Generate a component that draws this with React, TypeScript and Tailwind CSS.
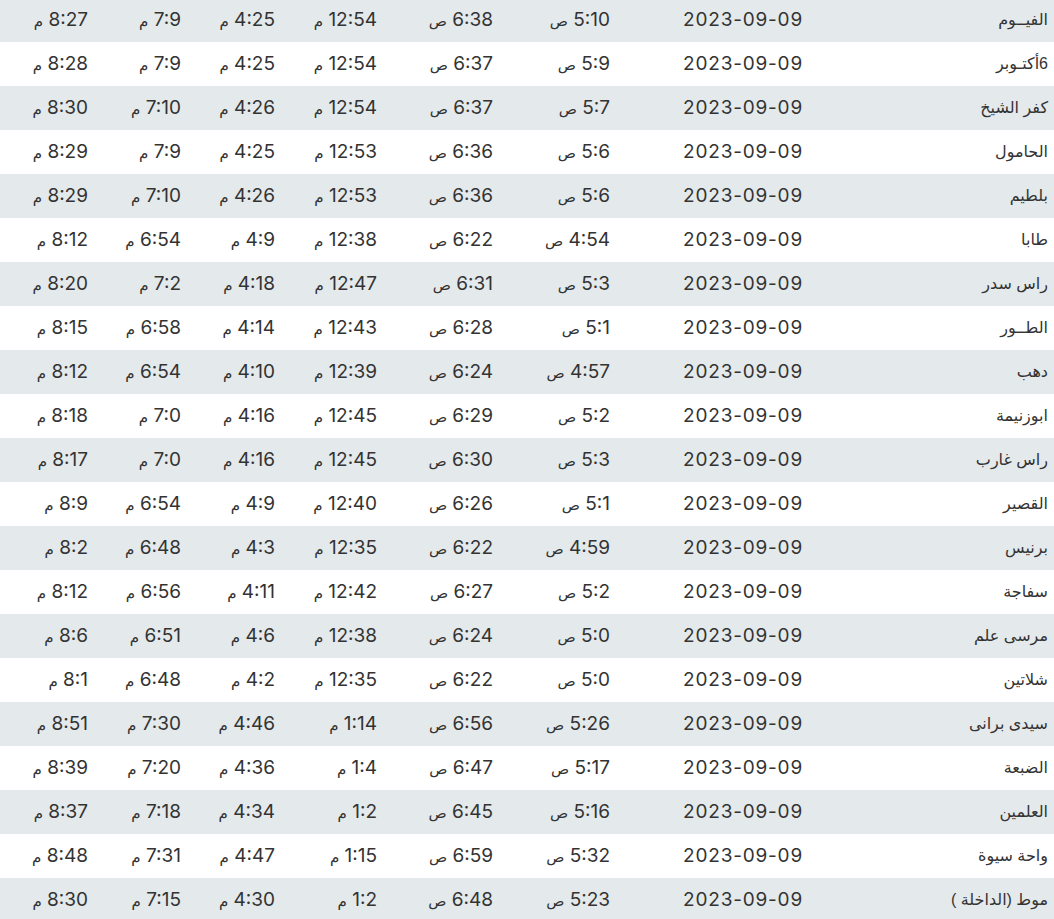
const rows: string[][] = [
  ["الفيــوم", "5:10 ص", "6:38 ص", "12:54 م", "4:25 م", "7:9 م", "8:27 م"],
  ["6أكتـوبر", "5:9 ص", "6:37 ص", "12:54 م", "4:25 م", "7:9 م", "8:28 م"],
  ["كفر الشيخ", "5:7 ص", "6:37 ص", "12:54 م", "4:26 م", "7:10 م", "8:30 م"],
  ["الحامول", "5:6 ص", "6:36 ص", "12:53 م", "4:25 م", "7:9 م", "8:29 م"],
  ["بلطيم", "5:6 ص", "6:36 ص", "12:53 م", "4:26 م", "7:10 م", "8:29 م"],
  ["طابا", "4:54 ص", "6:22 ص", "12:38 م", "4:9 م", "6:54 م", "8:12 م"],
  ["راس سدر", "5:3 ص", "6:31 ص", "12:47 م", "4:18 م", "7:2 م", "8:20 م"],
  ["الطــور", "5:1 ص", "6:28 ص", "12:43 م", "4:14 م", "6:58 م", "8:15 م"],
  ["دهب", "4:57 ص", "6:24 ص", "12:39 م", "4:10 م", "6:54 م", "8:12 م"],
  ["ابوزنيمة", "5:2 ص", "6:29 ص", "12:45 م", "4:16 م", "7:0 م", "8:18 م"],
  ["راس غارب", "5:3 ص", "6:30 ص", "12:45 م", "4:16 م", "7:0 م", "8:17 م"],
  ["القصير", "5:1 ص", "6:26 ص", "12:40 م", "4:9 م", "6:54 م", "8:9 م"],
  ["برنيس", "4:59 ص", "6:22 ص", "12:35 م", "4:3 م", "6:48 م", "8:2 م"],
  ["سفاجة", "5:2 ص", "6:27 ص", "12:42 م", "4:11 م", "6:56 م", "8:12 م"],
  ["مرسى علم", "5:0 ص", "6:24 ص", "12:38 م", "4:6 م", "6:51 م", "8:6 م"],
  ["شلاتين", "5:0 ص", "6:22 ص", "12:35 م", "4:2 م", "6:48 م", "8:1 م"],
  ["سيدى برانى", "5:26 ص", "6:56 ص", "1:14 م", "4:46 م", "7:30 م", "8:51 م"],
  ["الضبعة", "5:17 ص", "6:47 ص", "1:4 م", "4:36 م", "7:20 م", "8:39 م"],
  ["العلمين", "5:16 ص", "6:45 ص", "1:2 م", "4:34 م", "7:18 م", "8:37 م"],
  ["واحة سيوة", "5:32 ص", "6:59 ص", "1:15 م", "4:47 م", "7:31 م", "8:48 م"],
  ["موط (الداخلة )", "5:23 ص", "6:48 ص", "1:2 م", "4:30 م", "7:15 م", "8:30 م"],
];

function Time ({ value }: { value: string }) {
  const [time, suffix] = value.split(" ");
  return (
    <>
      {time} <span className="text-[15px]">{suffix}</span>
    </>
  );
}

export default function App () {
  return (
    <div className="h-[919px] overflow-hidden bg-white">
      <table
        dir="rtl"
        className="-mt-[2px] w-[1054px] table-fixed border-collapse text-[#333333] font-['Inter','DejaVu_Sans',sans-serif]"
      >
        <colgroup>
          <col className="w-[245px]" />
          <col className="w-[193px]" />
          <col className="w-[117px]" />
          <col className="w-[116px]" />
          <col className="w-[102px]" />
          <col className="w-[94px]" />
          <col className="w-[93px]" />
          <col className="w-[94px]" />
        </colgroup>
        <tbody>
          {rows.map((r, i) => (
            <tr key={i} className={i % 2 === 0 ? "h-[44px] bg-[#e4e9eb]" : "h-[44px] bg-white"}>
              <td className="pr-[6px] text-right font-['Liberation_Sans','DejaVu_Sans',sans-serif] text-[16px]">
                {r[0]}
              </td>
              <td className="pr-[6px] text-right text-[19px] tracking-[0.8px]">2023-09-09</td>
              {r.slice(1).map((t, j) => (
                <td key={j} className="pr-[6px] text-right text-[19px] whitespace-nowrap">
                  <Time value={t} />
                </td>
              ))}
            </tr>
          ))}
        </tbody>
      </table>
    </div>
  );
}
